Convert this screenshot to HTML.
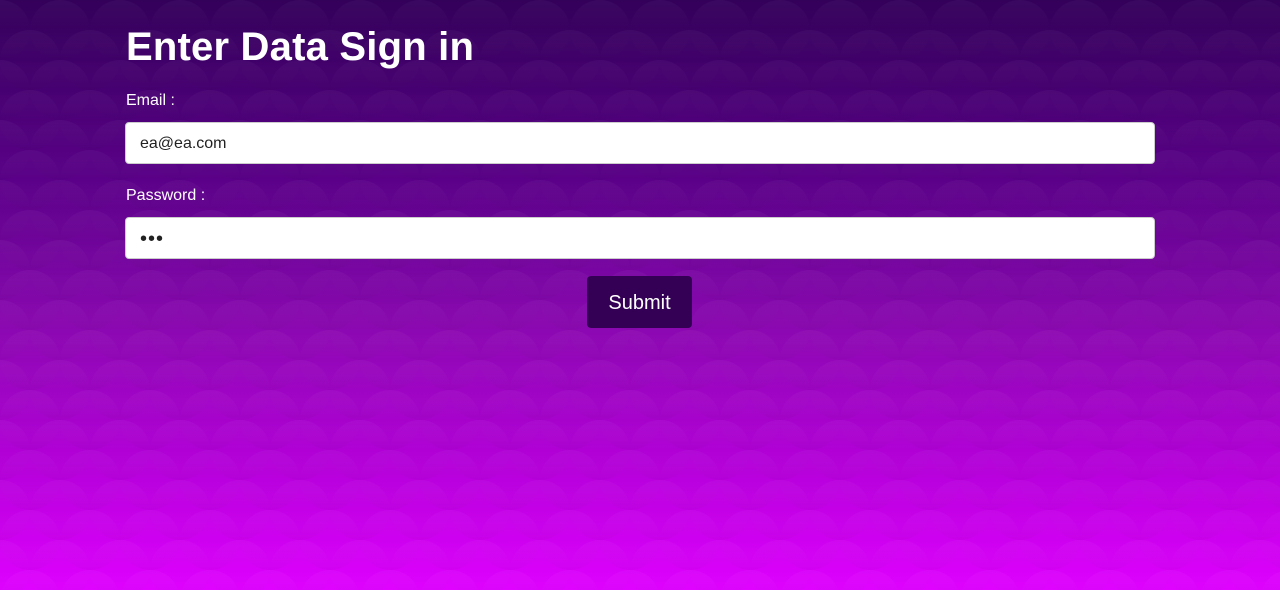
<!DOCTYPE html>
<html><head><meta charset="utf-8"><style>
html,body{margin:0;padding:0;width:1280px;height:590px;overflow:hidden}
body{background:linear-gradient(to bottom,#33005a 0%,#5a0088 30%,#8a08b0 55%,#b300d8 78%,#df00ff 100%);font-family:"Liberation Sans",sans-serif;position:relative}
svg.bg{position:absolute;left:0;top:0;display:block}
.wrap{position:absolute;left:125px;top:0;width:1030px}
h1{margin:0;position:absolute;top:25px;left:1px;font-size:40px;font-weight:bold;color:#fff;letter-spacing:0.2px}
label{position:absolute;color:#fff;font-size:16px;left:1px}
.inp{position:absolute;left:0;width:1028px;height:40px;background:#fff;border:1px solid #ccc;border-radius:4px;font-size:16px;color:#222;line-height:42px;box-sizing:content-box}
.inp span{padding-left:14px}
.btn{position:absolute;left:462px;top:276px;width:105px;height:52px;background:#330055;border-radius:4px;color:#fff;font-size:20px;text-align:center;line-height:54px}
</style></head><body>
<svg class="bg" width="1280" height="590" id="s">
<defs><linearGradient id="g" x1="0" y1="0" x2="0" y2="1"><stop offset="0" stop-color="#fff" stop-opacity="0.035"/><stop offset="0.5" stop-color="#fff" stop-opacity="0"/><stop offset="1" stop-color="#000" stop-opacity="0.03"/></linearGradient></defs>
</svg>
<script>
var s=document.getElementById('s'),h='';
for(var r=0;r<21;r++){var cy=30+r*30,off=(r%2)?30:0;for(var x=-60;x<1340;x+=60){h+='<circle cx="'+(x+off)+'" cy="'+cy+'" r="30" fill="url(#g)"/>';}}
s.insertAdjacentHTML('beforeend',h);
</script>
<div class="wrap">
<h1>Enter Data Sign in</h1>
<label style="top:92px">Email :</label>
<div class="inp" style="top:122px"><span>ea@ea.com</span></div>
<label style="top:187px">Password :</label>
<div class="inp" style="top:217px"><span style="font-size:20px;letter-spacing:1px">•••</span></div>
<div class="btn">Submit</div>
</div>
</body></html>
